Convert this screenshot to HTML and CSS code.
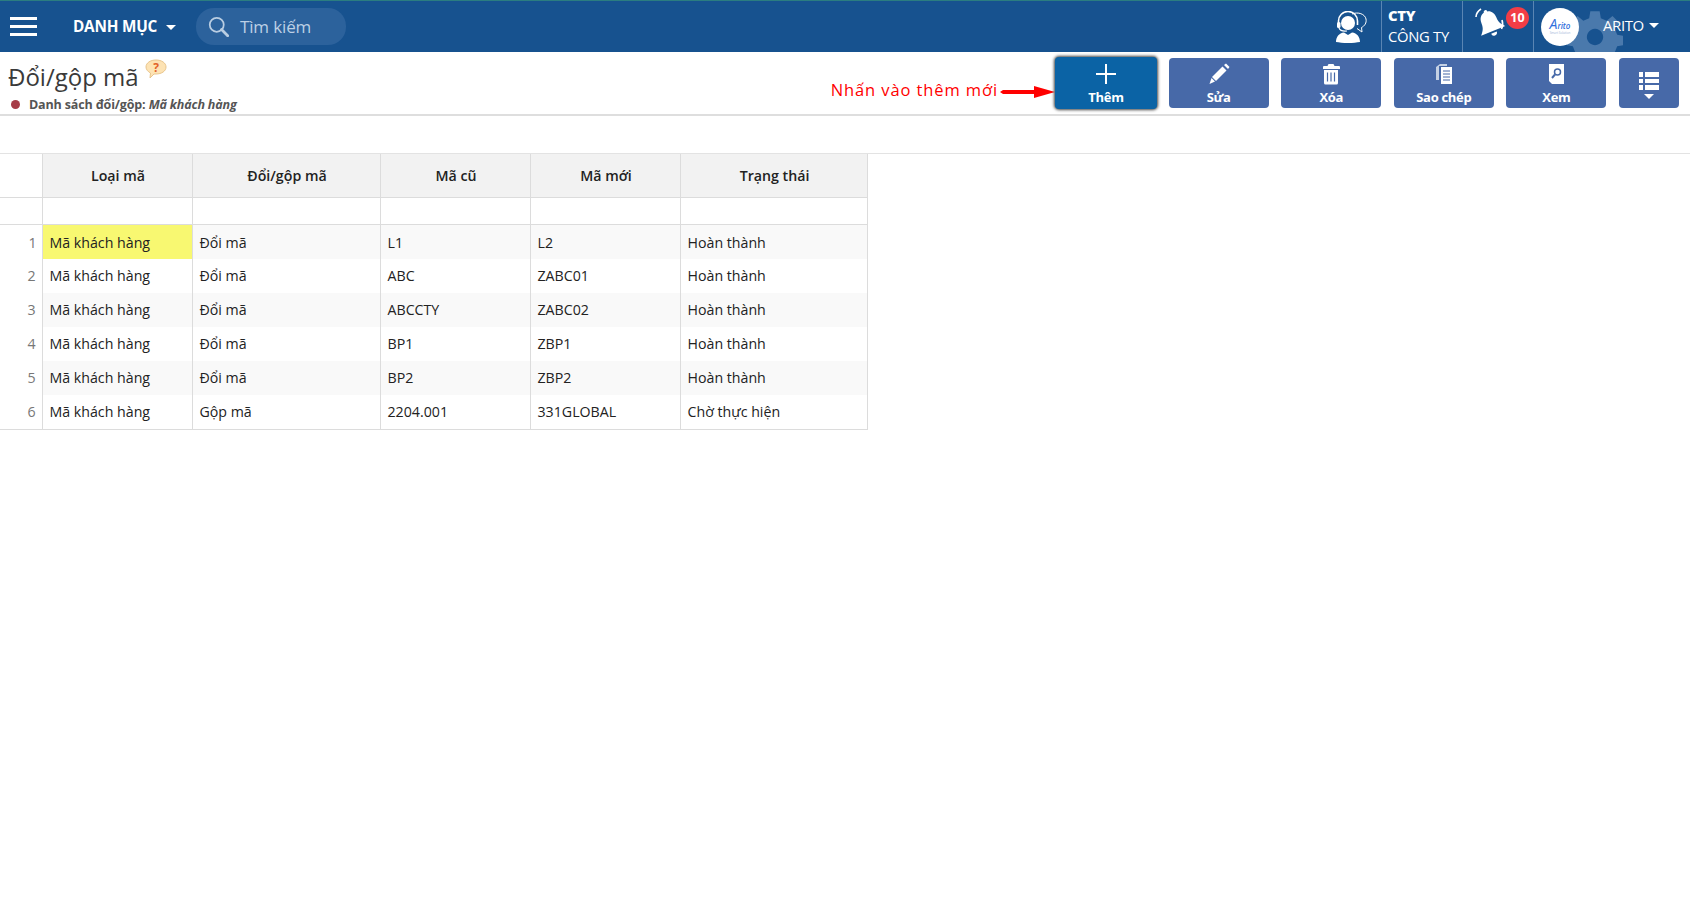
FILE: index.html
```html
<!DOCTYPE html>
<html lang="vi">
<head>
<meta charset="utf-8">
<title>Đổi/gộp mã</title>
<link rel="stylesheet" href="styles.css">
</head>
<body>
<header class="topbar">
  <button class="burger" aria-label="Menu"><span></span><span></span><span></span></button>
  <div class="catalog">DANH MỤC <i class="caret"></i></div>
  <div class="search">
    <svg class="search-icon" viewBox="0 0 24 24" width="21" height="21"><circle cx="10" cy="10" r="8" fill="none" stroke="#b9cde2" stroke-width="2"/><path d="M15.500 15.500 22.500 22.500" stroke="#b9cde2" stroke-width="3.200" stroke-linecap="round"/></svg>
    <span>Tìm kiếm</span>
  </div>
  <div class="spacer"></div>
  <svg class="support" viewBox="0 0 32 32" width="32" height="32">
    <path d="M17 3c6-2.500 13 0 14 5 .8 4-1.500 7-4.500 8.500L27 21l-5-3.500" fill="none" stroke="#fff" stroke-width="1"/>
    <circle cx="13" cy="12" r="7" fill="#fff"/>
    <path d="M3.500 14V10a9.500 9.500 0 0 1 19 0v4" fill="none" stroke="#fff" stroke-width="1.600"/>
    <rect x="2" y="11" width="3.500" height="6" rx="1.500" fill="#fff"/>
    <path d="M4 17c1 2.500 4 3.500 8 3" stroke="#fff" stroke-width="1.200" fill="none"/>
    <path d="M1 31c0-5 3-9 8-9.500l4 2.500 4-2.500c5 .5 8 4.500 8 9.500-3 .5-7 1-12 1s-9-.5-12-1z" fill="#fff"/>
  </svg>
  <div class="company"><b>CTY</b><span>CÔNG TY</span></div>
  <div class="bell-box">
    <svg class="bell" viewBox="0 0 32 32" width="32" height="32"><g transform="rotate(-22 16 16)"><path d="M16 4c-5 0-8 4-8 9 0 6-2 8-5 11.500h26C26 21 24 19 24 13c0-5-3-9-8-9z" fill="#fff"/><circle cx="16" cy="4" r="1.800" fill="#fff"/><path d="M13 26.500a3 3 0 0 0 6 0z" fill="#fff"/></g><path d="M2 10c0-3 2-6 5-8" stroke="#fff" stroke-width="1.600" fill="none"/><path d="M28 13c1 3 1 6-.5 9" stroke="#fff" stroke-width="1.600" fill="none"/></svg>
    <span class="badge">10</span>
  </div>
  <div class="user">
    <svg class="gear" viewBox="0 0 48 48" width="56" height="56"><path d="M20 2h8l1 6 5 2 5-4 6 6-4 5 2 5 6 1v8l-6 1-2 5 4 5-6 6-5-4-5 2-1 6h-8l-1-6-5-2-5 4-6-6 4-5-2-5-6-1v-8l6-1 2-5-4-5 6-6 5 4 5-2zM24 17a7 7 0 1 0 .01 0z" fill="#4a79ac" fill-rule="evenodd"/></svg>
    <div class="avatar"><span class="logo"><b>A</b>rito</span><span class="logo-sub">Smart Solution</span></div>
    <span class="user-name">ARITO</span><i class="caret small"></i>
  </div>
</header>

<section class="toolbar">
  <div class="heading">
    <h1>Đổi/gộp mã
      <svg class="help" viewBox="0 0 22 20" width="22" height="20"><path d="M11 1c5.500 0 10 2.800 10 7s-4.500 7-10 7H9l-4 4 .5-5C3 12.700 1 10.500 1 8c0-4.200 4.500-7 10-7z" fill="#fde3b4" stroke="#e9c58c"/><text x="11" y="12.500" text-anchor="middle" class="help-mark">?</text></svg>
    </h1>
    <p class="sub"><i class="dot"></i>Danh sách đổi/gộp: <em>Mã khách hàng</em></p>
  </div>
  <div class="note">
    <span>Nhấn vào thêm mới</span>
    <svg viewBox="0 0 55 14" width="55" height="14"><path d="M0 7l3-2h31V1l21 6-21 6V9H3z" fill="#f00"/></svg>
  </div>
  <div class="actions">
    <button class="btn primary">
      <svg viewBox="0 0 22 22" width="22" height="22"><path d="M11 1v20M1 11h20" stroke="#fff" stroke-width="2"/></svg>
      <span>Thêm</span>
    </button>
    <button class="btn">
      <svg viewBox="0 0 22 22" width="22" height="22"><path d="M14.500 3.500l4 4L8 18l-4-4z" fill="#fff"/><path d="M3.500 15l3.500 3.500L1.500 21z" fill="#fff"/><path d="M16 2 18 .5 21.500 4 20 6z" fill="#fff"/></svg>
      <span>Sửa</span>
    </button>
    <button class="btn">
      <svg viewBox="0 0 22 22" width="22" height="22"><path d="M8.500 1h5l1 2H19a1 1 0 0 1 1 1v2H3V4a1 1 0 0 1 1-1h3.500z" fill="#fff"/><path d="M4 7h14v13a1.500 1.500 0 0 1-1.500 1.500h-11A1.500 1.500 0 0 1 4 20z" fill="#fff"/><path d="M7.500 9.500v9M11 9.500v9M14.500 9.500v9" stroke="#4769a8" stroke-width="1.200"/></svg>
      <span>Xóa</span>
    </button>
    <button class="btn">
      <svg viewBox="0 0 22 22" width="22" height="22"><path d="M7 1h7v2H6v14H3V4z" fill="#c5d1e4"/><path d="M8 4h11v17H8z" fill="#fff"/><path d="M10 8h7M10 11h7M10 14h7M10 17h7" stroke="#4769a8"/></svg>
      <span>Sao chép</span>
    </button>
    <button class="btn">
      <svg viewBox="0 0 22 22" width="22" height="22"><path d="M4 1h15v20H7l-3-3z" fill="#fff"/><circle cx="12.500" cy="9" r="3" fill="none" stroke="#4769a8" stroke-width="1.500"/><path d="M10 11.500 7 15" stroke="#4769a8" stroke-width="2"/></svg>
      <span>Xem</span>
    </button>
    <button class="btn narrow">
      <svg viewBox="0 0 22 22" width="22" height="22"><path d="M1 2h4v5H1zM7 2h14v5H7zM1 9h4v4H1zM7 9h14v4H7zM1 15h4v5H1zM7 15h14v5H7z" fill="#fff"/></svg>
      <i class="caret"></i>
    </button>
  </div>
</section>

<div class="filterbar"></div>

<table class="grid">
  <colgroup>
    <col class="c-no"><col class="c-type"><col class="c-action"><col class="c-old"><col class="c-new"><col class="c-status">
  </colgroup>
  <thead>
    <tr class="head"><th class="no"></th><th>Loại mã</th><th>Đổi/gộp mã</th><th>Mã cũ</th><th>Mã mới</th><th>Trạng thái</th></tr>
    <tr class="filter"><td class="no"></td><td></td><td></td><td></td><td></td><td></td></tr>
  </thead>
  <tbody>
    <tr><td class="no">1</td><td class="active">Mã khách hàng</td><td>Đổi mã</td><td>L1</td><td>L2</td><td>Hoàn thành</td></tr>
    <tr><td class="no">2</td><td>Mã khách hàng</td><td>Đổi mã</td><td>ABC</td><td>ZABC01</td><td>Hoàn thành</td></tr>
    <tr><td class="no">3</td><td>Mã khách hàng</td><td>Đổi mã</td><td>ABCCTY</td><td>ZABC02</td><td>Hoàn thành</td></tr>
    <tr><td class="no">4</td><td>Mã khách hàng</td><td>Đổi mã</td><td>BP1</td><td>ZBP1</td><td>Hoàn thành</td></tr>
    <tr><td class="no">5</td><td>Mã khách hàng</td><td>Đổi mã</td><td>BP2</td><td>ZBP2</td><td>Hoàn thành</td></tr>
    <tr><td class="no">6</td><td>Mã khách hàng</td><td>Gộp mã</td><td>2204.001</td><td>331GLOBAL</td><td>Chờ thực hiện</td></tr>
  </tbody>
</table>
</body>
</html>
```

FILE: styles.css
```css
* { box-sizing: border-box; }
html, body { margin: 0; padding: 0; height: 100%; background: #fff; overflow: hidden; }
body { font-family: "Open Sans", "Noto Sans", sans-serif; color: #222; font-size: 14px; }

.topbar {
  display: flex; align-items: center; height: 52px; background: #17528f;
  border-top: 1px solid #2b7d80; color: #fff; overflow: hidden;
}
.burger { display: flex; flex-direction: column; gap: 5px; width: 27px; margin-left: 10px; padding: 0; border: 0; background: none; }
.burger span { display: block; height: 3px; background: #fff; }
.catalog { margin: -2px 0 0 36px; width: 108px; font-weight: 700; font-size: 15.300px; white-space: nowrap; letter-spacing: -.2px; }
.caret { display: inline-block; width: 0; height: 0; margin-left: 5px; vertical-align: middle; border: 5px solid transparent; border-top: 5px solid #fff; border-bottom: 0; }
.search { display: flex; align-items: center; gap: 11px; width: 150px; height: 37px; margin-left: 15px; padding-left: 12px; border-radius: 18px; background: #2c629c; color: #bcd0e5; font-size: 17px; }
.search span { white-space: nowrap; letter-spacing: -.15px; }
.spacer { flex: 1; }
.support { margin-right: 14px; }
.company { display: flex; flex-direction: column; justify-content: center; align-self: stretch; width: 82px; padding: 0 0 2px 6px; border-left: 1px solid #5a85b3; border-right: 1px solid #5a85b3; line-height: 21px; font-size: 14.800px; white-space: nowrap; letter-spacing: -.3px; }
.company b { font-weight: 800; }
.bell-box { position: relative; width: 71px; align-self: stretch; border-right: 1px solid #5a85b3; }
.bell { position: absolute; left: 11px; top: 6px; }
.badge { position: absolute; left: 43px; top: 6px; width: 23px; height: 22px; border-radius: 50%; background: #f23d46; color: #fff; font-size: 12.500px; font-weight: 700; line-height: 22px; text-align: center; }
.user { position: relative; display: flex; align-items: center; width: 156px; align-self: stretch; padding: 0 0 0 7px; }
.gear { position: absolute; left: 33px; top: 8px; }
.avatar { position: relative; display: flex; flex-direction: column; align-items: center; justify-content: center; width: 38px; height: 38px; border-radius: 50%; background: #fff; }
.logo { color: #2f6fdc; font-size: 8px; line-height: 10px; font-weight: 600; font-style: italic; }
.logo b { font-size: 14px; font-weight: 400; }
.logo-sub { color: #9db4d8; font-size: 3px; line-height: 4px; white-space: nowrap; }
.user-name { position: relative; top: -2px; margin-left: 24px; font-size: 15px; letter-spacing: -.4px; }
.caret.small { position: relative; top: -1px; }

.toolbar { display: flex; align-items: flex-start; height: 64px; border-bottom: 2px solid #dedede; }
.heading { flex: 1; padding: 7px 0 0 8px; }
h1 { margin: 0; height: 30px; font-size: 24px; font-weight: 400; line-height: 30px; color: #3a3a3a; white-space: nowrap; }
.help { vertical-align: 7px; margin-left: 0; }
.help-mark { font-size: 12px; font-weight: 700; fill: #e2622a; }
.sub { margin: 7px 0 0; font-size: 12.500px; line-height: 17px; font-weight: 700; color: #555; white-space: nowrap; letter-spacing: -.15px; }
.sub em { font-style: italic; }
.dot { display: inline-block; width: 9px; height: 9px; margin: 0 9px 0 3px; border-radius: 50%; background: #a63d48; }
.note { display: flex; align-items: center; gap: 2px; margin-top: 27px; color: #f00; font-size: 16.500px; line-height: 22px; white-space: nowrap; letter-spacing: .9px; }
.note svg { flex: none; margin-top: 4px; }
.actions { display: flex; gap: 12.600px; padding: 6px 11px 0 0; }
.btn { display: flex; flex-direction: column; align-items: center; justify-content: flex-start; width: 100px; height: 50px; padding: 5px 0 0; border: 0; border-radius: 4px; background: #4769a8; color: #fff; font: 700 13px/16px "Open Sans", "Noto Sans", sans-serif; letter-spacing: -.3px; }
.btn svg { display: block; height: 22px; margin-bottom: 4px; }
.btn.primary { width: 102px; height: 52px; margin: -1px -1px 0 0; padding-top: 6px; background: #0b63a5; box-shadow: 0 0 3px 1px #444; }
.btn.narrow { width: 60px; padding-top: 12px; }
.btn.narrow svg { margin-bottom: 2px; }
.btn.narrow .caret { margin: 0; }

.filterbar { height: 38px; border-bottom: 1px solid #e3e3e3; }

.grid { width: 867px; table-layout: fixed; border-collapse: collapse; border-bottom: 1px solid #dcdcdc; font-size: 14.200px; }
.c-no { width: 42px; } .c-type { width: 150px; } .c-action { width: 188px; } .c-old { width: 150px; } .c-new { width: 150px; } .c-status { width: 187px; }
.grid th, .grid td { padding: 0 5px 0 7px; border-left: 1px solid #dcdcdc; border-right: 1px solid #dcdcdc; overflow: hidden; white-space: nowrap; }
.grid th:first-child, .grid td:first-child { border-left: 0; }
.grid .head th { height: 43px; background: #f2f2f2; font-weight: 600; text-align: center; color: #222; border-bottom: 1px solid #dcdcdc; }
.grid .head th.no { background: #fff; }
.grid .filter td { height: 27px; border-bottom: 1px solid #dcdcdc; }
.grid tbody td { height: 34px; padding-bottom: 1px; color: #222; }
.grid tbody tr:first-child td { height: 35px; padding: 2px 5px 0 7px; }
.grid tbody tr:nth-child(odd) td { background: #f9f9f9; }
.grid tbody td.no { padding-right: 6px; text-align: right; color: #777; background: #fff !important; }
.grid tbody td.active { background: #f8f871 !important; }
```
